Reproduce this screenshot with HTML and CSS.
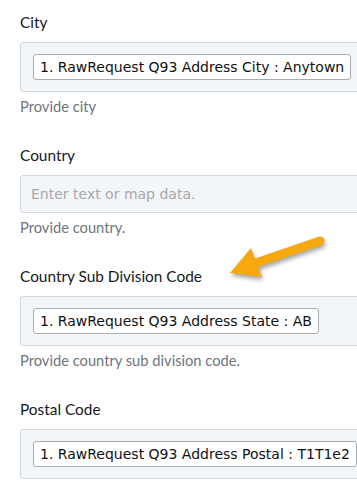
FILE: index.html
```html
<!DOCTYPE html>
<html lang="en">
<head>
    <meta charset="UTF-8">
    <meta name="viewport" content="width=device-width, initial-scale=1.0">
    <title>Address Mapping</title>
    <link rel="stylesheet" href="styles.css">
</head>
<body>

<div class="form">

    <div class="field">
        <label class="label">City</label>
        <div class="mapBox">
            <span class="chip">1. RawRequest Q93 Address City : Anytown</span>
        </div>
        <div class="help">Provide city</div>
    </div>

    <div class="field">
        <label class="label">Country</label>
        <div class="mapBox empty">
            <span class="placeholder">Enter text or map data.</span>
        </div>
        <div class="help">Provide country.</div>
    </div>

    <div class="field pointed">
        <label class="label">Country Sub Division Code</label>
        <!-- callout arrow pointing at the label -->
        <svg class="arrow" width="110" height="50" viewBox="0 0 110 50">
            <line x1="100" y1="9" x2="30" y2="33" stroke="#f6a90f" stroke-width="9" stroke-linecap="round"/>
            <polygon points="10,41 31,16 42,45" fill="#f6a90f"/>
        </svg>
        <div class="mapBox">
            <span class="chip">1. RawRequest Q93 Address State : AB</span>
        </div>
        <div class="help">Provide country sub division code.</div>
    </div>

    <div class="field">
        <label class="label">Postal Code</label>
        <div class="mapBox">
            <span class="chip">1. RawRequest Q93 Address Postal : T1T1e2</span>
        </div>
    </div>

</div>

</body>
</html>
```

FILE: styles.css
```css
body {
    margin: 0;
    background: #fff;
    overflow: hidden;
    font-family: Lato, "Open Sans", sans-serif;
    color: #222;
}

.form {
    width: 400px;
    padding: 12px 0 0 20px;
}

.field {
    margin-bottom: 29px;
}

.pointed {
    position: relative;
}

.label {
    display: block;
    font-size: 15.4px;
    line-height: 20px;
    margin-bottom: 10px;
    color: #16191c;
}

.mapBox {
    background-color: #f3f6f9;
    border: 1px solid #d3d8de;
    border-radius: 3px;
    padding: 11px 12px;
}

.mapBox.empty {
    padding: 9px 10px;
}

.chip {
    display: inline-block;
    background: #fff;
    border: 1px solid #a9adb2;
    border-radius: 3px;
    padding: 0 6px;
    height: 24px;
    line-height: 24px;
    font-family: "DejaVu Sans", Verdana, sans-serif;
    font-size: 14px;
    color: #111;
    white-space: nowrap;
}

.placeholder {
    display: block;
    line-height: 18px;
    font-family: "DejaVu Sans", Verdana, sans-serif;
    font-size: 14px;
    color: #a7a7a7;
}

.help {
    margin-top: 4px;
    font-size: 14.7px;
    line-height: 20px;
    color: #6f757b;
}

.arrow {
    position: absolute;
    left: 200px;
    top: -34px;
    filter: drop-shadow(1px 3px 2px rgba(0, 0, 0, 0.35));
}
```
